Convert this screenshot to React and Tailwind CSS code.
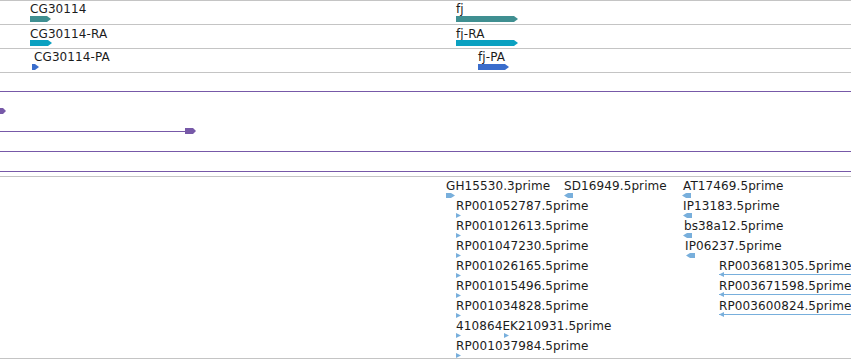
const GENE = '#3f8f91'
const RNA = '#0ba1c1'
const CDS = '#3a6dcc'
const PURPLE = '#7759a8'
const EST = '#78afdc'

const leftCol = [
  'RP001052787.5prime',
  'RP001012613.5prime',
  'RP001047230.5prime',
  'RP001026165.5prime',
  'RP001015496.5prime',
  'RP001034828.5prime',
  '410864EK210931.5prime',
  'RP001037984.5prime',
]

// small nudges, the reads do not start at exactly the same base
const rightCol = [
  { label: 'AT17469.5prime', dx: 1, tri: 0 },
  { label: 'IP13183.5prime', dx: 1, tri: 1 },
  { label: 'bs38a12.5prime', dx: 2, tri: 1 },
  { label: 'IP06237.5prime', dx: 3, tri: 4 },
]

const longReads = ['RP003681305.5prime', 'RP003671598.5prime', 'RP003600824.5prime']

function Bar({ x, y, w, color }) {
  return (
    <svg className="absolute" style={{ left: x, top: y }} width={w} height={6}>
      <polygon points={`0,0 ${w - 4},0 ${w},3 ${w - 4},6 0,6`} fill={color} />
    </svg>
  )
}

function Label({ x, y, children }) {
  return (
    <div className="absolute whitespace-nowrap leading-none text-[12px] tracking-[0.1px] text-[#1c1c1c]" style={{ left: x, top: y }}>
      {children}
    </div>
  )
}

function Text({ children }) {
  return <div className="h-[12px] whitespace-nowrap leading-none text-[12px] tracking-[0.1px] text-[#1c1c1c]">{children}</div>
}

function TriRight({ big }) {
  return big ? (
    <svg width={10} height={5} className="block">
      <polygon points="0,0 5,0 9,2.5 5,5 0,5" fill={EST} />
    </svg>
  ) : (
    <svg width={6} height={5} className="block">
      <polygon points="0,0 5,2.5 0,5" fill={EST} />
    </svg>
  )
}

function TriLeft() {
  return (
    <svg width={10} height={5} className="block">
      <polygon points="0,2.5 4,0 9,0 9,5 4,5" fill={EST} />
    </svg>
  )
}

export default function App() {
  return (
    <div className="w-[851px] h-[360px] overflow-hidden bg-white font-['DejaVu_Sans',sans-serif] flex flex-col">
      {/* gene / transcript / cds rows */}
      <div className="relative h-[25px] shrink-0 border-t border-b border-[#c4c4c4]">
        <Label x={30} y={2}>CG30114</Label>
        <Bar x={30} y={15} w={21} color={GENE} />
        <Label x={456} y={2}>fj</Label>
        <Bar x={456} y={15} w={62} color={GENE} />
      </div>
      <div className="relative h-[24px] shrink-0 border-b border-[#c4c4c4]">
        <Label x={30} y={3}>CG30114-RA</Label>
        <Bar x={30} y={15} w={22} color={RNA} />
        <Label x={456} y={3}>fj-RA</Label>
        <Bar x={456} y={15} w={62} color={RNA} />
      </div>
      <div className="relative h-[24px] shrink-0 border-b border-[#c4c4c4]">
        <Label x={34} y={2}>CG30114-PA</Label>
        <Bar x={32} y={15} w={7} color={CDS} />
        <Label x={478} y={2}>fj-PA</Label>
        <Bar x={478} y={15} w={31} color={CDS} />
      </div>

      <div className="h-[18px] shrink-0" />

      {/* purple alignment track */}
      <div className="relative h-[61px] shrink-0 border-t border-b border-[#7759a8]">
        <svg className="absolute" style={{ left: -5, top: 16 }} width={12} height={6}>
          <polygon points="0,0 8,0 11,3 8,6 0,6" fill={PURPLE} />
        </svg>
        <div className="absolute left-0 top-[39px] w-[187px] h-px bg-[#7759a8]" />
        <svg className="absolute" style={{ left: 185, top: 36 }} width={12} height={6}>
          <polygon points="0,0 8,0 11,3 8,6 0,6" fill={PURPLE} />
        </svg>
      </div>
      <div className="h-[20px] shrink-0 border-b border-[#7759a8]" />
      <div className="h-[4px] shrink-0" />

      {/* EST track */}
      <div className="relative h-[183px] shrink-0 border-t border-b border-[#c4c4c4]">
        <div className="absolute left-[446px] top-[2.5px] flex flex-col gap-[1px]">
          <Text>GH15530.3prime</Text>
          <TriRight big />
        </div>
        <div className="absolute left-[564px] top-[2.5px] flex flex-col gap-[1px]">
          <Text>SD16949.5prime</Text>
          <TriLeft />
        </div>

        <div className="absolute left-[456px] top-[22.5px] flex flex-col">
          {leftCol.map((label) => (
            <div key={label} className="h-[20px] flex flex-col gap-[1px]">
              <Text>{label}</Text>
              {label.startsWith('4108') ? (
                <div className="flex gap-[42px]">
                  <TriRight />
                  <TriRight />
                </div>
              ) : (
                <TriRight />
              )}
            </div>
          ))}
        </div>

        <div className="absolute left-[682px] top-[2.5px] flex flex-col">
          {rightCol.map((r) => (
            <div key={r.label} className="h-[20px] flex flex-col gap-[1px]">
              <div style={{ paddingLeft: r.dx }}>
                <Text>{r.label}</Text>
              </div>
              <div style={{ paddingLeft: r.tri }}>
                <TriLeft />
              </div>
            </div>
          ))}
        </div>

        <div className="absolute left-[719px] right-0 top-[82.5px] flex flex-col">
          {longReads.map((name) => (
            <div key={name} className="h-[20px] flex flex-col">
              <Text>{name}</Text>
              <div className="relative mt-[0.5px] h-[5px]">
                <div className="absolute left-0 right-0 top-[2px] h-px bg-[#78afdc]" />
                <svg width={6} height={5} className="block relative">
                  <polygon points="0,2.5 5,0 5,5" fill={EST} />
                </svg>
              </div>
            </div>
          ))}
        </div>
      </div>
    </div>
  )
}
